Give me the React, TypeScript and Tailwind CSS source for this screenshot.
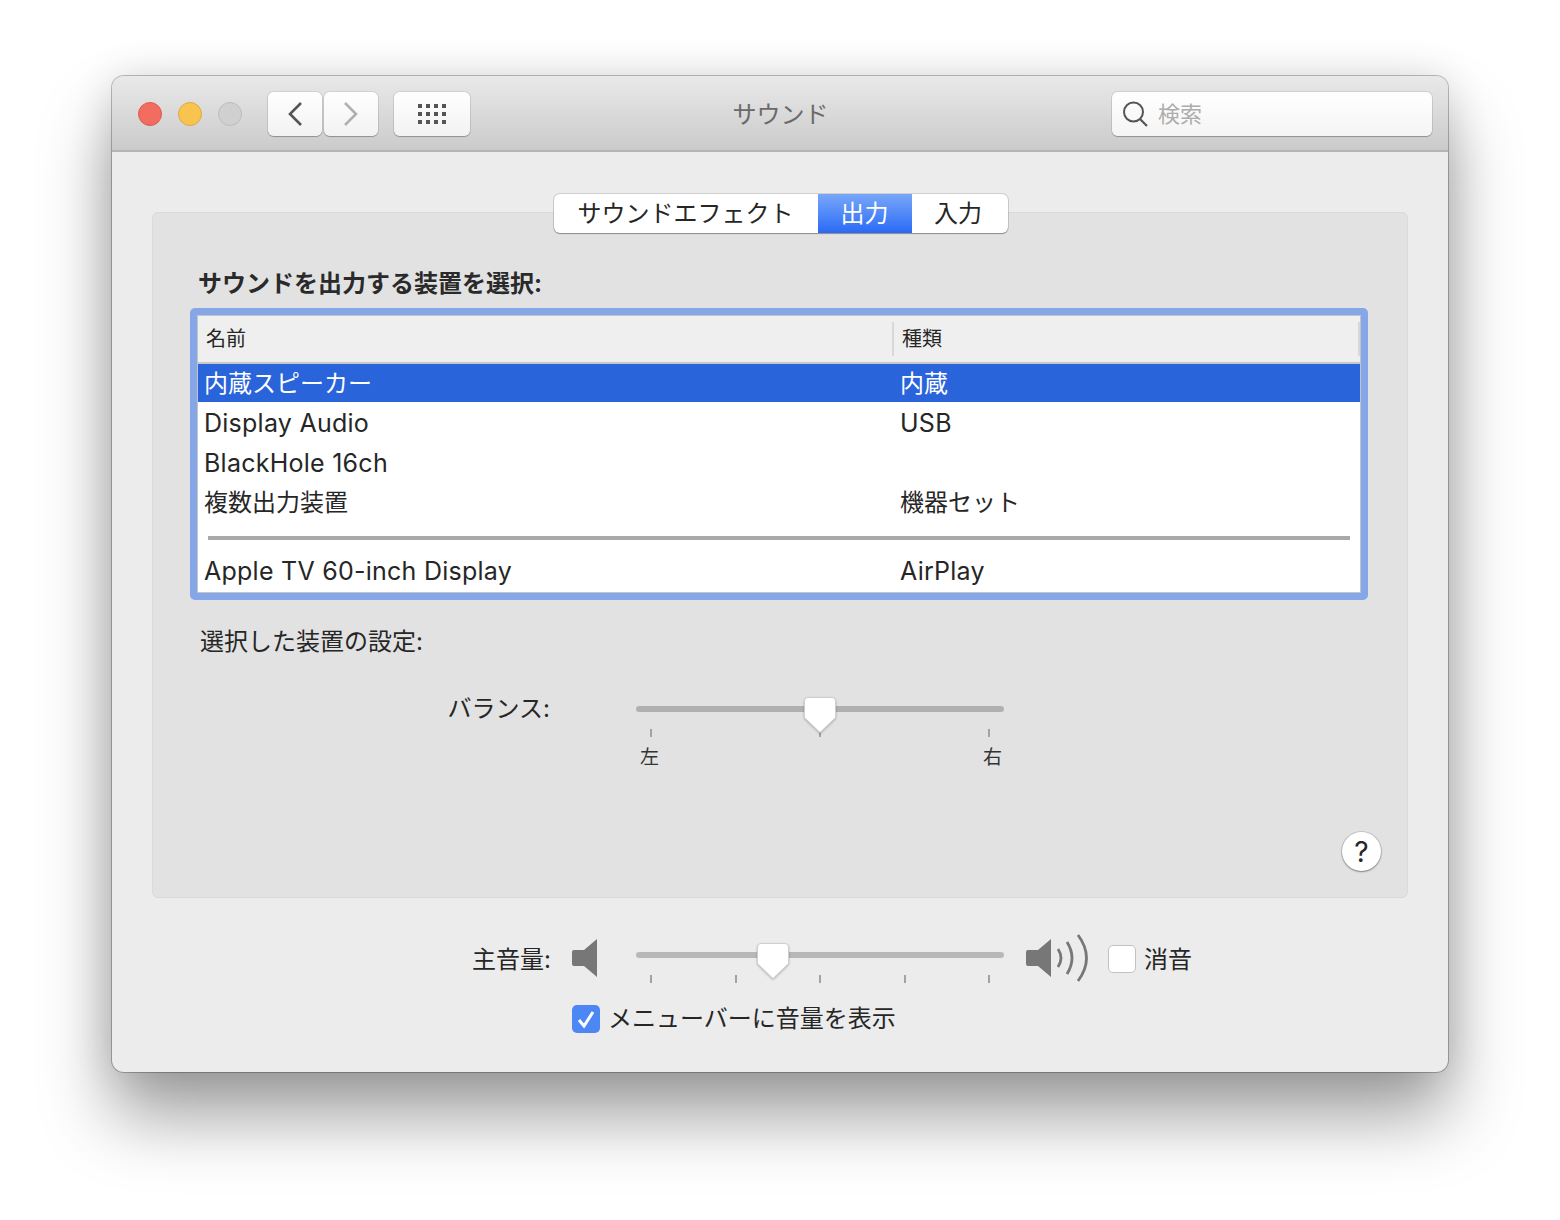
import React from 'react';

const Thumb = () => (
  <svg width="34" height="38" viewBox="0 0 34 38" className="block drop-shadow-[0_1px_1px_rgba(0,0,0,0.25)]">
    <path
      d="M5 1.5H29a3.5 3.5 0 0 1 3.5 3.5V21.5L17 36.5 1.5 21.5V5A3.5 3.5 0 0 1 5 1.5Z"
      fill="#fff"
      stroke="#cfcfcf"
      strokeWidth="1"
    />
  </svg>
);

const Slider = ({ thumbLeft, ticks, track }: { thumbLeft: string; ticks: number; track: string }) => (
  <div className="relative w-[368px]">
    <div className={`h-[6px] rounded-full ${track}`} />
    <div className="mt-[17px] flex justify-between px-[14px]">
      {Array.from({ length: ticks }).map((_, i) => (
        <div key={i} className="h-[8px] w-[2px] bg-[#a3a3a3]" />
      ))}
    </div>
    <div className={`absolute top-[-10px] ${thumbLeft}`}>
      <Thumb />
    </div>
  </div>
);

// latin names come out larger than the kana in the original
const cellText = (text?: string) =>
  text && /^[\x00-\x7f]+$/.test(text) ? 'pt-[2px] text-[25px] tracking-[0.25px]' : 'text-[24px]';

const Row = ({ name, kind, selected }: { name: string; kind?: string; selected?: boolean }) => (
  <div
    className={`flex items-center pl-[6px] ${selected ? 'h-[38px] bg-[#2964db] pt-[1px] text-white' : 'h-[40px] pt-[2px] text-[#262626]'}`}
  >
    <div className={`w-[696px] ${cellText(name)}`}>{name}</div>
    <div className={cellText(kind)}>{kind}</div>
  </div>
);

export default function App() {
  return (
    <div
      className="h-[1220px] w-[1560px] overflow-hidden bg-white pl-[112px] pt-[76px] text-[#262626]"
      style={{ fontFamily: '"Inter", "Noto Sans CJK JP", sans-serif' }}
    >
      <div className="flex h-[996px] w-[1336px] flex-col rounded-[12px] bg-[#ececec] shadow-[0_0_0_1px_rgba(0,0,0,0.25),0_44px_70px_rgba(0,0,0,0.38),0_0_40px_rgba(0,0,0,0.12)]">
        {/* title bar */}
        <div className="relative flex h-[76px] shrink-0 items-center rounded-t-[12px] border-b-2 border-[#b4b4b4] bg-gradient-to-b from-[#e9e9e9] to-[#cbcbcb] pl-[26px] pr-[16px] pt-[1px]">
          <div className="flex gap-[16px]">
            <div className="h-[24px] w-[24px] rounded-full border border-[#dc5a52] bg-[#f26d60]" />
            <div className="h-[24px] w-[24px] rounded-full border border-[#dfa941] bg-[#f8c44f]" />
            <div className="h-[24px] w-[24px] rounded-full border border-[#bcbcbc] bg-[#d0d0d0]" />
          </div>
          <div className="ml-[26px] flex gap-[2px]">
            <div className="flex h-[44px] w-[54px] items-center justify-center rounded-[6px] bg-gradient-to-b from-white to-[#f2f2f2] shadow-[0_0_0_1px_rgba(0,0,0,0.08),0_1px_1px_rgba(0,0,0,0.25)]">
              <svg width="18" height="28" viewBox="0 0 18 28" fill="none">
                <path d="M15 3 4 14l11 11" stroke="#555" strokeWidth="2.6" />
              </svg>
            </div>
            <div className="flex h-[44px] w-[54px] items-center justify-center rounded-[6px] bg-gradient-to-b from-white to-[#f2f2f2] shadow-[0_0_0_1px_rgba(0,0,0,0.08),0_1px_1px_rgba(0,0,0,0.25)]">
              <svg width="18" height="28" viewBox="0 0 18 28" fill="none">
                <path d="M3 3l11 11L3 25" stroke="#b0b0b0" strokeWidth="2.6" />
              </svg>
            </div>
          </div>
          <div className="ml-[16px] flex h-[44px] w-[76px] items-center justify-center rounded-[6px] bg-gradient-to-b from-white to-[#f2f2f2] shadow-[0_0_0_1px_rgba(0,0,0,0.08),0_1px_1px_rgba(0,0,0,0.25)]">
            <svg width="28" height="20" viewBox="0 0 28 20" fill="#555">
              {[0, 8, 16].map((y) =>
                [0, 8, 16, 24].map((x) => <rect key={`${x}-${y}`} x={x} y={y} width="4" height="4" />),
              )}
            </svg>
          </div>
          <div className="flex-1 pr-[21px] pt-[2px] text-center text-[24px] text-[#6a6a6a]">サウンド</div>
          <div className="flex h-[44px] w-[320px] items-center rounded-[6px] bg-gradient-to-b from-white to-[#f4f4f4] pl-[10px] text-[22px] text-[#adadad] shadow-[0_0_0_1px_rgba(0,0,0,0.08),0_1px_1px_rgba(0,0,0,0.25)]">
            <svg width="26" height="28" viewBox="0 0 26 28" fill="none" className="mr-[10px]">
              <circle cx="11.5" cy="12" r="9.5" stroke="#555" strokeWidth="2" />
              <path d="M18 19l7 7" stroke="#555" strokeWidth="2.2" />
            </svg>
            <span className="pt-[1px]">検索</span>
          </div>
        </div>

        {/* body */}
        <div className="flex flex-1 flex-col px-[40px] pt-[60px]">
          <div className="flex h-[686px] shrink-0 flex-col rounded-[6px] border border-[#dadada] bg-[#e2e2e2]">
            <div className="-mt-[19px] ml-[1px] flex justify-center">
              <div className="flex h-[39px] overflow-hidden rounded-[6px] bg-white text-[24px] shadow-[0_0_0_1px_rgba(0,0,0,0.12),0_1px_1px_rgba(0,0,0,0.3)]">
                <div className="flex w-[264px] items-center justify-center">サウンドエフェクト</div>
                <div className="flex w-[94px] items-center justify-center bg-gradient-to-b from-[#78a6f8] to-[#2a69f5] text-white">
                  出力
                </div>
                <div className="flex w-[96px] items-center justify-center pr-[3px]">入力</div>
              </div>
            </div>

            <div className="mt-[36px] pl-[45px] text-[24px] leading-[30px] font-bold text-[#2a2a2a]">
              サウンドを出力する装置を選択:
            </div>

            <div className="ml-[37px] mt-[9px] h-[292px] w-[1178px] rounded-[5px] bg-[#85a6e7] p-[7px]">
              <div className="h-[278px] w-[1164px] border border-[#c4c4c4] bg-white">
                <div className="flex h-[48px] items-center border-b-2 border-[#c8c8c8] bg-[#efefef] text-[20px]">
                  <div className="w-[694px] pl-[8px]">名前</div>
                  <div className="flex h-[34px] flex-1 items-center justify-between border-l-2 border-[#d8d8d8] pl-[8px]">
                    種類
                    <div className="h-[34px] w-[2px] bg-[#d8d8d8]" />
                  </div>
                </div>
                <Row name="内蔵スピーカー" kind="内蔵" selected />
                <Row name="Display Audio" kind="USB" />
                <Row name="BlackHole 16ch" />
                <Row name="複数出力装置" kind="機器セット" />
                <div className="ml-[10px] mt-[14px] h-[4px] w-[1142px] bg-[#a9a9a9]" />
                <div className="mt-[10px]">
                  <Row name="Apple TV 60-inch Display" kind="AirPlay" />
                </div>
              </div>
            </div>

            <div className="mt-[27px] pl-[47px] text-[24px] leading-[30px]">選択した装置の設定:</div>

            <div className="mt-[37px] flex">
              <div className="w-[398px] pr-[1px] text-right text-[24px] leading-[30px]">バランス:</div>
              <div className="ml-[85px] pt-[12px]">
                <Slider thumbLeft="left-[167px]" ticks={3} track="bg-[#b0b0b0]" />
                <div className="mt-[8px] flex w-[366px] justify-between pl-[4px] text-[19px] leading-[26px] text-[#333]">
                  <span>左</span>
                  <span>右</span>
                </div>
              </div>
            </div>

            <div className="mt-auto flex justify-end pb-[26px] pr-[26px]">
              <div className="flex h-[39px] w-[39px] items-center justify-center rounded-full bg-white text-[28px] leading-none shadow-[0_0_0_1px_rgba(0,0,0,0.12),0_1px_2px_rgba(0,0,0,0.35)]">
                ?
              </div>
            </div>
          </div>

          {/* volume */}
          <div className="mt-[37px] flex h-[50px] items-start">
            <div className="mt-[10px] w-[399px] text-right text-[24px] leading-[30px]">主音量:</div>
            <svg width="26" height="38" viewBox="0 0 26 38" className="ml-[21px] mt-[4px]" fill="#777">
              <path d="M25 0v38L12 27H2a2 2 0 0 1-2-2V13a2 2 0 0 1 2-2h10Z" />
            </svg>
            <div className="ml-[38px] mt-[17px]">
              <Slider thumbLeft="left-[120px]" ticks={5} track="bg-[#b8b8b8]" />
            </div>
            <svg width="64" height="48" viewBox="0 0 64 48" className="-mt-[1px] ml-[22px]" fill="none">
              <path d="M25 5v38L12 32H2a2 2 0 0 1-2-2V18a2 2 0 0 1 2-2h10Z" fill="#777" />
              <path d="M32 15q6 9 0 18M41 8q10 16 0 32M52 1q17 23 0 46" stroke="#777" strokeWidth="2.8" />
            </svg>
            <div className="ml-[18px] mt-[10px] h-[28px] w-[28px] rounded-[5px] border border-[#c2c2c2] bg-white" />
            <div className="ml-[8px] mt-[10px] text-[24px] leading-[30px]">消音</div>
          </div>

          <div className="ml-[420px] mt-[16px] flex items-center text-[24px]">
            <div className="flex h-[28px] w-[28px] items-center justify-center rounded-[5px] bg-[#4c87f5]">
              <svg width="20" height="20" viewBox="0 0 20 20" fill="none">
                <path d="M3 11l5 6 9-14" stroke="#fff" strokeWidth="3" />
              </svg>
            </div>
            <span className="ml-[8px]">メニューバーに音量を表示</span>
          </div>
        </div>
      </div>
    </div>
  );
}
